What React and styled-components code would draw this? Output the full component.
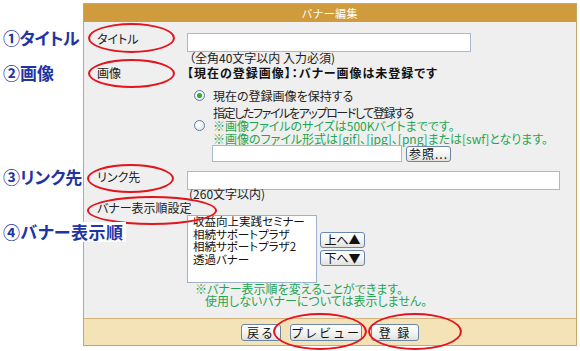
import React from "react";
import styled, { createGlobalStyle } from "styled-components";

const GlobalStyle = createGlobalStyle`
  html, body { margin: 0; padding: 0; background: #ffffff; }
  body {
    font-family: "Noto Sans CJK JP", "Noto Sans", sans-serif;
    font-feature-settings: "palt";
    color: #222;
  }
  * { box-sizing: border-box; }
`;

const Page = styled.div`
  position: relative;
  width: 580px;
  height: 351px;
  overflow: hidden;
  padding: 3px 0 0 83px;
`;

const Panel = styled.div`
  width: 494px;
  border: 1px solid #c9a46b;
  background: #efefef;
`;

const Header = styled.div`
  height: 18px;
  line-height: 18px;
  background: #d09b3c;
  color: #fff;
  text-align: center;
  font-size: 11px;
  letter-spacing: 0.5px;
`;

const Body = styled.div`
  height: 296px;
  padding: 11px 0 0 13px;
  font-size: 12px;
`;

const Row = styled.div`
  display: grid;
  grid-template-columns: 90px 1fr;
  margin-top: ${(p) => p.$mt || 0}px;
`;

const Label = styled.div`
  font-size: 12px;
  line-height: ${(p) => p.$lh || 12}px;
  color: #222;
  white-space: nowrap;
`;

const Field = styled.div`
  display: flex;
  flex-direction: column;
  align-items: flex-start;
`;

const TextInput = styled.div`
  width: ${(p) => p.$w}px;
  height: ${(p) => p.$h || 19}px;
  background: #fff;
  border: 1px solid #a7b9d0;
`;

const Hint = styled.div`
  font-size: 12px;
  line-height: 12px;
  margin-top: ${(p) => p.$mt || 0}px;
  margin-left: ${(p) => p.$ml || 0}px;
  color: #222;
  white-space: nowrap;
`;

const Bold = styled.div`
  font-size: 12px;
  line-height: 14px;
  font-weight: bold;
  letter-spacing: 1px;
  color: #111;
  white-space: nowrap;
`;

const RadioRow = styled.div`
  display: flex;
  align-items: center;
  gap: 8px;
  margin-left: 7px;
  margin-top: ${(p) => p.$mt || 0}px;
`;

const Radio = styled.span`
  width: 11px;
  height: 11px;
  border-radius: 50%;
  border: 1px solid #5d7ca3;
  background: radial-gradient(circle at 40% 35%, #ffffff 0%, #e4e4e4 100%);
  display: flex;
  align-items: center;
  justify-content: center;
  flex: none;
  &::after {
    content: "";
    width: 5px;
    height: 5px;
    border-radius: 50%;
    background: ${(p) => (p.$checked ? "#2fa83a" : "transparent")};
  }
`;

const Lines = styled.div`
  display: flex;
  flex-direction: column;
  font-size: 12px;
  line-height: 13px;
  white-space: nowrap;
`;

const Tight = styled.span`
  letter-spacing: -1.4px;
`;

const Green = styled.span`
  color: #1fa551;
`;

const GreenNote = styled.div`
  color: #1fa551;
  font-size: 12px;
  line-height: 12px;
  white-space: nowrap;
  margin-left: ${(p) => p.$ml || 0}px;
`;

const FileRow = styled.div`
  display: flex;
  align-items: center;
  gap: 4px;
  margin-left: 25px;
`;

const Button = styled.button`
  width: ${(p) => p.$w}px;
  height: ${(p) => p.$h || 16}px;
  padding: 0;
  margin: 0;
  font-family: inherit;
  font-size: 12px;
  line-height: 14px;
  color: #111;
  white-space: nowrap;
  letter-spacing: ${(p) => p.$ls || 0}px;
  background: linear-gradient(#ffffff, #f4f4f2 50%, #e2e2dc);
  border: 1px solid #6a86ab;
  border-radius: 3px;
  display: flex;
  align-items: center;
  justify-content: center;
`;

const ListWrap = styled.div`
  display: flex;
  align-items: center;
  gap: 3px;
`;

const ListBox = styled.div`
  width: 130px;
  height: 68px;
  background: #fff;
  border: 1px solid #9fb2cb;
  overflow: hidden;
  padding-left: 5px;
`;

const ListInner = styled.div`
  margin-top: -1px;
  font-size: 11.5px;
  line-height: 12.5px;
  color: #111;
  white-space: nowrap;
`;

const ButtonCol = styled.div`
  display: flex;
  flex-direction: column;
  gap: 2px;
`;

const Footer = styled.div`
  height: 27px;
  border-top: 1px solid #d2b27a;
  background: #f3e3b7;
  display: flex;
  justify-content: center;
  gap: 9px;
  padding-top: 5px;
`;

const Ellipse = styled.div`
  position: absolute;
  left: ${(p) => p.$x}px;
  top: ${(p) => p.$y}px;
  width: ${(p) => p.$w}px;
  height: ${(p) => p.$h}px;
  border: 2.5px solid #e3141c;
  border-radius: 50%;
  pointer-events: none;
`;

const Note = styled.div`
  position: absolute;
  left: 3px;
  top: ${(p) => p.$y}px;
  font-size: 17px;
  line-height: 20px;
  font-weight: bold;
  color: #1f35a3;
  white-space: nowrap;
  letter-spacing: ${(p) => p.$ls || 0}px;
  background: ${(p) => (p.$bg ? "#ffffff" : "transparent")};
  padding-right: 2px;
`;

const items = ["収益向上実践セミナー", "相続サポートプラザ", "相続サポートプラザ2", "透過バナー"];

export default function App() {
  return (
    <>
      <GlobalStyle />
      <Page>
        <Panel>
          <Header>バナー編集</Header>
          <Body>
            <Row>
              <Label>タイトル</Label>
              <Field>
                <TextInput $w={284} />
                <Hint $ml={2}>（全角40文字以内 入力必須)</Hint>
              </Field>
            </Row>
            <Row $mt={2}>
              <Label $lh={14}>画像</Label>
              <Field>
                <Bold>【現在の登録画像】：バナー画像は未登録です</Bold>
                <RadioRow $mt={9}>
                  <Radio $checked />
                  <Lines>現在の登録画像を保持する</Lines>
                </RadioRow>
                <RadioRow $mt={4}>
                  <Radio />
                  <Lines>
                    <Tight>指定したファイルをアップロードして登録する</Tight>
                    <Green>※画像ファイルのサイズは500Kバイトまでです。</Green>
                    <Green>※画像のファイル形式は[gif]、[jpg]、[png]または[swf]となります。</Green>
                  </Lines>
                </RadioRow>
                <FileRow>
                  <TextInput $w={190} $h={17} />
                  <Button $w={45} $ls={1}>参照...</Button>
                </FileRow>
              </Field>
            </Row>
            <Row $mt={9}>
              <Label>リンク先</Label>
              <Field>
                <TextInput $w={373} />
                <Hint $mt={-2} $ml={2}>(260文字以内)</Hint>
              </Field>
            </Row>
            <Row $mt={1}>
              <Label $lh={14}>バナー表示順設定</Label>
              <div />
            </Row>
            <Row>
              <div />
              <Field>
                <ListWrap>
                  <ListBox>
                    <ListInner>
                      {items.map((t) => (
                        <div key={t}>{t}</div>
                      ))}
                    </ListInner>
                  </ListBox>
                  <ButtonCol>
                    <Button $w={45}>上へ▲</Button>
                    <Button $w={45}>下へ▼</Button>
                  </ButtonCol>
                </ListWrap>
                <GreenNote $ml={8}>※バナー表示順を変えることができます。</GreenNote>
                <GreenNote $ml={18}>使用しないバナーについては表示しません。</GreenNote>
              </Field>
            </Row>
          </Body>
          <Footer>
            <Button $w={40} $h={17} $ls={2}>戻る</Button>
            <Button $w={72} $h={17} $ls={2}>プレビュー</Button>
            <Button $w={48} $h={17} $ls={2}>登 録</Button>
          </Footer>
        </Panel>

        <Ellipse $x={88} $y={23} $w={87} $h={30} />
        <Ellipse $x={88} $y={59} $w={87} $h={29} />
        <Ellipse $x={87} $y={164} $w={87} $h={29} />
        <Ellipse $x={87} $y={196} $w={130} $h={29} />
        <Ellipse $x={273} $y={313} $w={94} $h={37} />
        <Ellipse $x={368} $y={313} $w={94} $h={37} />

        <Note $y={28} $ls={-0.5}>①タイトル</Note>
        <Note $y={63}>②画像</Note>
        <Note $y={167}>③リンク先</Note>
        <Note $y={222} $bg $ls={0.5}>④バナー表示順</Note>
      </Page>
    </>
  );
}
